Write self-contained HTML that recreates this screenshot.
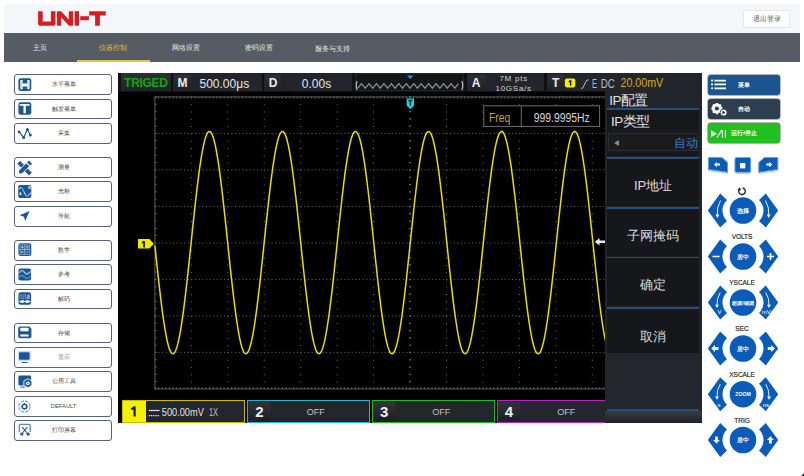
<!DOCTYPE html>
<html><head><meta charset="utf-8">
<style>
*{box-sizing:border-box;margin:0;padding:0}
html,body{width:804px;height:476px;overflow:hidden;background:#fff;font-family:"Liberation Sans",sans-serif}
.abs{position:absolute}
#hdr{position:absolute;left:4px;top:4px;width:796px;height:29px;background:#f4f7f9}
#nav{position:absolute;left:4px;top:33px;width:796px;height:28.5px;background:#555c63}
.tab{position:absolute;top:0;height:28.5px;width:73px;line-height:29px;text-align:center;font-size:6.8px;color:#e8eaec;padding-right:0.6px}
.tab.on{color:#e9bd3c}
#uline{position:absolute;left:72.7px;top:27.2px;width:73.6px;height:1.4px;background:#e8c04a}
#logout{position:absolute;left:739px;top:5.5px;width:47px;height:18.2px;background:#fff;border:1px solid #e6e9ec;border-radius:1px;font-size:6.5px;color:#555;text-align:center;line-height:16px}
.lb{position:absolute;left:14.2px;width:97.8px;height:20.9px;border:1.7px solid #56637a;border-radius:3px;background:#fff}
.lb .t{position:absolute;left:1px;right:0;top:0;bottom:0;text-align:center;font-size:5.8px;line-height:18.5px;color:#4a4a4a}
.lb svg{position:absolute;left:3px;top:2.8px;width:14px;height:14px;overflow:visible}
#scr{position:absolute;left:118px;top:72.8px;width:584px;height:350px;background:#000}

.grp{position:absolute;top:73.4px;height:18.1px;background:#22262c}
.lbx{position:absolute;top:1.3px;height:15.2px;background:linear-gradient(#2e3137,#1d2024);font:bold 12px "Liberation Sans",sans-serif;color:#ececec;text-align:center;line-height:17.6px}
.val{position:absolute;top:0;height:18.1px;font-size:12px;color:#e6e6e6;text-align:center;line-height:22.5px}
#bar{position:absolute;left:118px;top:72.8px;width:584px;height:19.2px;background:#0f1113}

#menu{position:absolute;z-index:5;left:605px;top:91px;width:97px;height:331.8px;background:#22262c}
.bl{position:absolute;left:2px;width:92.2px;height:1.8px;background:#25507c;box-shadow:0 -1px 1px #24262c}
.mb{position:absolute;left:2px;width:92.2px;background:#16171b;color:#dcdcdc;font-size:13px;text-align:center;font-weight:300}
.chb{position:absolute;top:400px;height:22.5px;border:1px solid;background:#23262c}
.chl{position:absolute;left:0.7px;top:0.7px;width:21.5px;height:19.2px;background:linear-gradient(#303338,#1c1f23);color:#f0f0f0;font:bold 15px "Liberation Sans",sans-serif;text-align:center;line-height:20px}
.off{position:absolute;top:0;height:20.5px;line-height:23.5px;font-size:9px;color:#c4c4c4;text-align:center;width:40px}

.rb{position:absolute;left:708px;width:72.4px;height:20.1px;border-radius:3px;color:#fff;font-size:6.2px;font-weight:bold;text-align:center;line-height:20px;box-shadow:0 0 0 0.7px rgba(30,30,30,0.45)}
.rb span{position:absolute;left:0;right:0;top:0;padding-right:0.3px}
.kl{position:absolute;left:712px;width:60px;text-align:center;font-size:6.6px;color:#222;line-height:8px;letter-spacing:-0.1px;-webkit-text-stroke:0.15px #222}
</style></head><body>
<div id="hdr">
  <svg class="abs" style="left:0;top:0" width="120" height="29" viewBox="4 4 120 29">
    <g fill="#d81c24">
      <path d="M38.1 11.2h4.6v10.2h8.2V11.2h4.6v12.2c0 1.4-.9 2.3-2.3 2.3H40.4c-1.4 0-2.3-.9-2.3-2.3z"/>
      <path d="M56.9 11.2h4.2l7.7 8.3v-8.3h4.3v14.5h-4.1l-7.9-8.4v8.4h-4.2z"/>
      <rect x="74.6" y="11.2" width="4.4" height="14.5"/>
      <rect x="80.2" y="16.2" width="8.7" height="4"/>
      <path d="M89.2 11.2h16.6v4.3h-5.9v10.2h-4.8V15.5h-5.9z"/>
    </g>
  </svg>
  <div id="logout">退出登录</div>
</div>
<div id="nav">
  <div class="tab" style="left:0">主页</div>
  <div class="tab on" style="left:73px">仪器控制</div>
  <div class="tab" style="left:146px">网络设置</div>
  <div class="tab" style="left:219px">密码设置</div>
  <div class="tab" style="left:292px;line-height:31px">服务与支持</div>
  <div id="uline"></div>
</div>

<!-- LEFT BUTTONS -->
<div id="left">
<div class="lb" style="top:74.10px"><svg viewBox="0 0 14 14"><rect x="0.4" y="0.3" width="12.9" height="12.7" rx="2.3" fill="#1c5794"/><path d="M2.3 2h2.3v3.6h4.7V2h2.3v9.3H9.3V8.4H4.6v2.9H2.3z" fill="#fff"/><path d="M3.45 2.6v8.1M10.45 2.6v8.1" stroke="#7fa3c8" stroke-width="0.4"/></svg><div class="t">水平菜单</div></div>
<div class="lb" style="top:98.55px"><svg viewBox="0 0 14 14"><rect x="0.4" y="0.2" width="12.9" height="12.65" rx="2.3" fill="#1c5794"/><path d="M1.7 1.95h9.9v1.7H7.8v7.7H5.5V3.65H1.7z" fill="#fff"/></svg><div class="t">触发菜单</div></div>
<div class="lb" style="top:123.00px"><svg viewBox="0 0 14 14"><path d="M1.1 4.9L5.7 10.6L9.4 2.5L12.3 8" stroke="#1c5794" stroke-width="1.1" fill="none"/><circle cx="1.1" cy="4.9" r="1.4" fill="#1c5794"/><circle cx="5.7" cy="10.6" r="1.5" fill="#1c5794"/><circle cx="9.4" cy="2.5" r="1.5" fill="#1c5794"/><circle cx="12.3" cy="8" r="1.5" fill="#1c5794"/></svg><div class="t">采集</div></div>
<div class="lb" style="top:156.90px"><svg viewBox="0 0 14 14"><g transform="rotate(45 6.6 7.1)"><rect x="-1.7" y="5.1" width="16.6" height="4" fill="#1c5794"/><path d="M1 5.1v1.5M3.5 5.1v1M10 5.1v1M12.5 5.1v1.5" stroke="#fff" stroke-width="0.5"/></g><g transform="rotate(-45 6.6 6.9)"><path d="M-1.9 6.9L0.6 4.6H11.4V9.2H0.6z" fill="#1c5794" stroke="#fff" stroke-width="0.8"/><rect x="12.3" y="4.6" width="2.6" height="4.6" fill="#1c5794"/></g></svg><div class="t">测量</div></div>
<div class="lb" style="top:181.35px"><svg viewBox="0 0 14 14"><rect x="0.2" y="0.1" width="13.1" height="13" rx="2" fill="#1c5794"/><path d="M0.8 4.2C2.5 2 3.8 2.6 5.2 5.2S7.6 11 9.2 11S11.6 9.4 12.8 7.6" stroke="#bcd2ea" stroke-width="1.1" fill="none"/><path d="M3.2 3.2C4.2 3.6 5 4.8 5.6 6M8.2 10.9C9 11 10 10.2 10.8 9.3" stroke="#3a8ef0" stroke-width="1.1" fill="none"/><text x="0.9" y="9.6" font-size="3.6" fill="#e8eef6" font-family="Liberation Sans" font-weight="bold">A</text><text x="10.2" y="4.4" font-size="3.6" fill="#e8eef6" font-family="Liberation Sans" font-weight="bold">B</text></svg><div class="t">光标</div></div>
<div class="lb" style="top:205.80px"><svg viewBox="0 0 14 14"><path d="M11.6 0.9L1.7 5.3L5.9 6.8L7.2 10.9Z" fill="#1c5794"/></svg><div class="t">导航</div></div>
<div class="lb" style="top:239.70px"><svg viewBox="0 0 14 14"><rect x="0.4" y="0.25" width="12.9" height="12.65" rx="2.3" fill="#1c5794"/><rect x="2" y="1.9" width="9.6" height="9.4" fill="none" stroke="#b8cce2" stroke-width="0.6"/><path d="M6.8 1.9v9.4M2 6.6h9.6" stroke="#b8cce2" stroke-width="0.8"/><path d="M3 4.2h2.6M4.3 2.9v2.6M8 3.6h2.6M8 4.9h2.6M3.3 8l2 2.2M5.3 8l-2 2.2M8 9.1h2.6" stroke="#e6eef8" stroke-width="0.7"/></svg><div class="t">数学</div></div>
<div class="lb" style="top:264.15px"><svg viewBox="0 0 14 14"><rect x="0.4" y="0.5" width="12.7" height="12" rx="2.3" fill="#1c5794"/><path d="M0.8 5.1C2 3.2 3.2 2.6 4.2 2.6C6 2.6 6.8 6 8.7 6C10.4 6 11.6 4.2 12.9 3.4" stroke="#a9c1dd" stroke-width="1.3" fill="none"/><path d="M0.8 9.4C2 8.1 3 7.5 4.2 7.5C6 7.5 6.8 10.6 8.7 10.6C10.4 10.6 11.6 8.6 12.9 7.9" stroke="#3f8fe6" stroke-width="1.3" fill="none"/></svg><div class="t">参考</div></div>
<div class="lb" style="top:288.60px"><svg viewBox="0 0 14 14"><rect x="0.4" y="0.35" width="12.7" height="12.45" rx="2.3" fill="#1c5794"/><path d="M1.9 6.8V2.8H3.9V6.8H5.8V2.8H7.6V6.8H9.4V2.8H11.4V6.8" stroke="#8fb0d4" stroke-width="0.7" fill="none"/><rect x="9.5" y="3" width="1.8" height="3.8" fill="#8fb0d4"/><path d="M0.6 9.6h12.3" stroke="#fff" stroke-width="0.7"/><ellipse cx="4.2" cy="9.6" rx="2.4" ry="1.3" fill="#fff"/><ellipse cx="9.4" cy="9.6" rx="2.4" ry="1.3" fill="#fff"/></svg><div class="t">解码</div></div>
<div class="lb" style="top:322.50px"><svg viewBox="0 0 14 14"><path d="M0.2 2.2A1.8 1.8 0 0 1 2 0.45H11.3L13.4 2.6V10.55A1.8 1.8 0 0 1 11.6 12.35H2A1.8 1.8 0 0 1 0.2 10.55Z" fill="#1c5794"/><rect x="2.3" y="1.8" width="8.3" height="3.4" rx="0.4" fill="#fff"/><rect x="2.3" y="8.4" width="8.3" height="2.1" rx="0.3" fill="#fff"/></svg><div class="t">存储</div></div>
<div class="lb" style="top:346.95px"><svg viewBox="0 0 14 14"><rect x="0" y="0.1" width="13.2" height="9.7" rx="0.8" fill="#b7c8dc"/><rect x="0.5" y="0.6" width="12.2" height="8.7" fill="#dfe7f0"/><rect x="1" y="1.3" width="10.6" height="7.4" rx="1" fill="#1c5794"/><rect x="3.6" y="10.9" width="6.1" height="1.2" rx="0.6" fill="#1c5794"/></svg><div class="t" style="color:#8a8a8a">显示</div></div>
<div class="lb" style="top:371.40px"><svg viewBox="0 0 14 14"><rect x="0.4" y="0.55" width="12.7" height="10" rx="1.2" fill="#1c5794"/><rect x="2.5" y="11.6" width="4.5" height="1" fill="#1c5794"/><path d="M9.85 3.2L14.2 5.7V10.8L9.85 13.3L5.5 10.8V5.7Z" fill="#fff"/><path d="M9.85 4.1L13.4 6.15V10.3L9.85 12.4L6.3 10.3V6.15Z" fill="#1c5794"/><circle cx="9.85" cy="8.3" r="1.9" fill="#fff"/><path d="M9.3 7.3v2l1.6-1z" fill="#1c5794"/></svg><div class="t">公用工具</div></div>
<div class="lb" style="top:395.85px"><svg viewBox="0 0 14 14"><circle cx="6.45" cy="6.5" r="5.6" fill="none" stroke="#1c5794" stroke-width="0.9" stroke-dasharray="3.2 1.2" opacity="0.85"/><circle cx="6.45" cy="6.5" r="2.3" fill="none" stroke="#1c5794" stroke-width="1.5"/><path d="M6.45 3.4v1M6.45 8.6v1M3.35 6.5h1M8.55 6.5h1M4.3 4.35l.7.7M8.6 8.65l-.7-.7M8.6 4.35l-.7.7M4.3 8.65l.7-.7" stroke="#1c5794" stroke-width="1.1"/></svg><div class="t">DEFAULT</div></div>
<div class="lb" style="top:420.30px"><svg viewBox="0 0 14 14"><path d="M1.4 8V1.3A1 1 0 0 1 2.4 0.4H11.2A1 1 0 0 1 12.2 1.3V8" fill="none" stroke="#5d88bd" stroke-width="1.3"/><path d="M4.2 3.2L9.2 9M9.4 3.2L4.4 9" stroke="#1c5794" stroke-width="1.1"/><circle cx="3.8" cy="10.1" r="1.7" fill="#1c5794"/><circle cx="10.1" cy="10.1" r="1.7" fill="#1c5794"/><circle cx="3.8" cy="10.1" r="0.5" fill="#8fb0d4"/></svg><div class="t">打印屏幕</div></div>
</div>

<!-- SCOPE -->

<div id="scr"></div>
<svg class="abs" style="left:0;top:0" width="804" height="476" viewBox="0 0 804 476">
 <g stroke="#5c5c5c" stroke-width="1" fill="none">
  <path d="M154.9 388.90V96.9H665.20V388.90Z"/>
  <path d="M154.90 96.9v1.6M154.90 388.90v-1.6M158.55 96.9v1.6M158.55 388.90v-1.6M162.19 96.9v1.6M162.19 388.90v-1.6M165.84 96.9v1.6M165.84 388.90v-1.6M169.48 96.9v1.6M169.48 388.90v-1.6M173.12 96.9v1.6M173.12 388.90v-1.6M176.77 96.9v1.6M176.77 388.90v-1.6M180.42 96.9v1.6M180.42 388.90v-1.6M184.06 96.9v1.6M184.06 388.90v-1.6M187.71 96.9v1.6M187.71 388.90v-1.6M191.35 96.9v1.6M191.35 388.90v-1.6M195.00 96.9v1.6M195.00 388.90v-1.6M198.64 96.9v1.6M198.64 388.90v-1.6M202.29 96.9v1.6M202.29 388.90v-1.6M205.93 96.9v1.6M205.93 388.90v-1.6M209.57 96.9v1.6M209.57 388.90v-1.6M213.22 96.9v1.6M213.22 388.90v-1.6M216.87 96.9v1.6M216.87 388.90v-1.6M220.51 96.9v1.6M220.51 388.90v-1.6M224.16 96.9v1.6M224.16 388.90v-1.6M227.80 96.9v1.6M227.80 388.90v-1.6M231.44 96.9v1.6M231.44 388.90v-1.6M235.09 96.9v1.6M235.09 388.90v-1.6M238.74 96.9v1.6M238.74 388.90v-1.6M242.38 96.9v1.6M242.38 388.90v-1.6M246.03 96.9v1.6M246.03 388.90v-1.6M249.67 96.9v1.6M249.67 388.90v-1.6M253.31 96.9v1.6M253.31 388.90v-1.6M256.96 96.9v1.6M256.96 388.90v-1.6M260.61 96.9v1.6M260.61 388.90v-1.6M264.25 96.9v1.6M264.25 388.90v-1.6M267.89 96.9v1.6M267.89 388.90v-1.6M271.54 96.9v1.6M271.54 388.90v-1.6M275.19 96.9v1.6M275.19 388.90v-1.6M278.83 96.9v1.6M278.83 388.90v-1.6M282.48 96.9v1.6M282.48 388.90v-1.6M286.12 96.9v1.6M286.12 388.90v-1.6M289.76 96.9v1.6M289.76 388.90v-1.6M293.41 96.9v1.6M293.41 388.90v-1.6M297.06 96.9v1.6M297.06 388.90v-1.6M300.70 96.9v1.6M300.70 388.90v-1.6M304.35 96.9v1.6M304.35 388.90v-1.6M307.99 96.9v1.6M307.99 388.90v-1.6M311.63 96.9v1.6M311.63 388.90v-1.6M315.28 96.9v1.6M315.28 388.90v-1.6M318.93 96.9v1.6M318.93 388.90v-1.6M322.57 96.9v1.6M322.57 388.90v-1.6M326.22 96.9v1.6M326.22 388.90v-1.6M329.86 96.9v1.6M329.86 388.90v-1.6M333.50 96.9v1.6M333.50 388.90v-1.6M337.15 96.9v1.6M337.15 388.90v-1.6M340.80 96.9v1.6M340.80 388.90v-1.6M344.44 96.9v1.6M344.44 388.90v-1.6M348.09 96.9v1.6M348.09 388.90v-1.6M351.73 96.9v1.6M351.73 388.90v-1.6M355.38 96.9v1.6M355.38 388.90v-1.6M359.02 96.9v1.6M359.02 388.90v-1.6M362.67 96.9v1.6M362.67 388.90v-1.6M366.31 96.9v1.6M366.31 388.90v-1.6M369.96 96.9v1.6M369.96 388.90v-1.6M373.60 96.9v1.6M373.60 388.90v-1.6M377.25 96.9v1.6M377.25 388.90v-1.6M380.89 96.9v1.6M380.89 388.90v-1.6M384.54 96.9v1.6M384.54 388.90v-1.6M388.18 96.9v1.6M388.18 388.90v-1.6M391.83 96.9v1.6M391.83 388.90v-1.6M395.47 96.9v1.6M395.47 388.90v-1.6M399.12 96.9v1.6M399.12 388.90v-1.6M402.76 96.9v1.6M402.76 388.90v-1.6M406.41 96.9v1.6M406.41 388.90v-1.6M410.05 96.9v1.6M410.05 388.90v-1.6M413.70 96.9v1.6M413.70 388.90v-1.6M417.34 96.9v1.6M417.34 388.90v-1.6M420.99 96.9v1.6M420.99 388.90v-1.6M424.63 96.9v1.6M424.63 388.90v-1.6M428.27 96.9v1.6M428.27 388.90v-1.6M431.92 96.9v1.6M431.92 388.90v-1.6M435.57 96.9v1.6M435.57 388.90v-1.6M439.21 96.9v1.6M439.21 388.90v-1.6M442.86 96.9v1.6M442.86 388.90v-1.6M446.50 96.9v1.6M446.50 388.90v-1.6M450.14 96.9v1.6M450.14 388.90v-1.6M453.79 96.9v1.6M453.79 388.90v-1.6M457.44 96.9v1.6M457.44 388.90v-1.6M461.08 96.9v1.6M461.08 388.90v-1.6M464.73 96.9v1.6M464.73 388.90v-1.6M468.37 96.9v1.6M468.37 388.90v-1.6M472.01 96.9v1.6M472.01 388.90v-1.6M475.66 96.9v1.6M475.66 388.90v-1.6M479.31 96.9v1.6M479.31 388.90v-1.6M482.95 96.9v1.6M482.95 388.90v-1.6M486.60 96.9v1.6M486.60 388.90v-1.6M490.24 96.9v1.6M490.24 388.90v-1.6M493.88 96.9v1.6M493.88 388.90v-1.6M497.53 96.9v1.6M497.53 388.90v-1.6M501.18 96.9v1.6M501.18 388.90v-1.6M504.82 96.9v1.6M504.82 388.90v-1.6M508.47 96.9v1.6M508.47 388.90v-1.6M512.11 96.9v1.6M512.11 388.90v-1.6M515.75 96.9v1.6M515.75 388.90v-1.6M519.40 96.9v1.6M519.40 388.90v-1.6M523.05 96.9v1.6M523.05 388.90v-1.6M526.69 96.9v1.6M526.69 388.90v-1.6M530.34 96.9v1.6M530.34 388.90v-1.6M533.98 96.9v1.6M533.98 388.90v-1.6M537.62 96.9v1.6M537.62 388.90v-1.6M541.27 96.9v1.6M541.27 388.90v-1.6M544.91 96.9v1.6M544.91 388.90v-1.6M548.56 96.9v1.6M548.56 388.90v-1.6M552.21 96.9v1.6M552.21 388.90v-1.6M555.85 96.9v1.6M555.85 388.90v-1.6M559.50 96.9v1.6M559.50 388.90v-1.6M563.14 96.9v1.6M563.14 388.90v-1.6M566.79 96.9v1.6M566.79 388.90v-1.6M570.43 96.9v1.6M570.43 388.90v-1.6M574.08 96.9v1.6M574.08 388.90v-1.6M577.72 96.9v1.6M577.72 388.90v-1.6M581.37 96.9v1.6M581.37 388.90v-1.6M585.01 96.9v1.6M585.01 388.90v-1.6M588.65 96.9v1.6M588.65 388.90v-1.6M592.30 96.9v1.6M592.30 388.90v-1.6M595.95 96.9v1.6M595.95 388.90v-1.6M599.59 96.9v1.6M599.59 388.90v-1.6M603.24 96.9v1.6M603.24 388.90v-1.6M606.88 96.9v1.6M606.88 388.90v-1.6M610.52 96.9v1.6M610.52 388.90v-1.6M614.17 96.9v1.6M614.17 388.90v-1.6M617.82 96.9v1.6M617.82 388.90v-1.6M621.46 96.9v1.6M621.46 388.90v-1.6M625.11 96.9v1.6M625.11 388.90v-1.6M628.75 96.9v1.6M628.75 388.90v-1.6M632.40 96.9v1.6M632.40 388.90v-1.6M636.04 96.9v1.6M636.04 388.90v-1.6M639.69 96.9v1.6M639.69 388.90v-1.6M643.33 96.9v1.6M643.33 388.90v-1.6M646.98 96.9v1.6M646.98 388.90v-1.6M650.62 96.9v1.6M650.62 388.90v-1.6M654.27 96.9v1.6M654.27 388.90v-1.6M657.91 96.9v1.6M657.91 388.90v-1.6M661.56 96.9v1.6M661.56 388.90v-1.6M665.20 96.9v1.6M665.20 388.90v-1.6M154.9 96.90h1.6M154.9 104.20h1.6M154.9 111.50h1.6M154.9 118.80h1.6M154.9 126.10h1.6M154.9 133.40h1.6M154.9 140.70h1.6M154.9 148.00h1.6M154.9 155.30h1.6M154.9 162.60h1.6M154.9 169.90h1.6M154.9 177.20h1.6M154.9 184.50h1.6M154.9 191.80h1.6M154.9 199.10h1.6M154.9 206.40h1.6M154.9 213.70h1.6M154.9 221.00h1.6M154.9 228.30h1.6M154.9 235.60h1.6M154.9 242.90h1.6M154.9 250.20h1.6M154.9 257.50h1.6M154.9 264.80h1.6M154.9 272.10h1.6M154.9 279.40h1.6M154.9 286.70h1.6M154.9 294.00h1.6M154.9 301.30h1.6M154.9 308.60h1.6M154.9 315.90h1.6M154.9 323.20h1.6M154.9 330.50h1.6M154.9 337.80h1.6M154.9 345.10h1.6M154.9 352.40h1.6M154.9 359.70h1.6M154.9 367.00h1.6M154.9 374.30h1.6M154.9 381.60h1.6M154.9 388.90h1.6M409.05 96.90h2M409.05 104.20h2M409.05 111.50h2M409.05 118.80h2M409.05 126.10h2M409.05 133.40h2M409.05 140.70h2M409.05 148.00h2M409.05 155.30h2M409.05 162.60h2M409.05 169.90h2M409.05 177.20h2M409.05 184.50h2M409.05 191.80h2M409.05 199.10h2M409.05 206.40h2M409.05 213.70h2M409.05 221.00h2M409.05 228.30h2M409.05 235.60h2M409.05 242.90h2M409.05 250.20h2M409.05 257.50h2M409.05 264.80h2M409.05 272.10h2M409.05 279.40h2M409.05 286.70h2M409.05 294.00h2M409.05 301.30h2M409.05 308.60h2M409.05 315.90h2M409.05 323.20h2M409.05 330.50h2M409.05 337.80h2M409.05 345.10h2M409.05 352.40h2M409.05 359.70h2M409.05 367.00h2M409.05 374.30h2M409.05 381.60h2M409.05 388.90h2" stroke="#6a6a6a"/>
 </g>
 <g stroke="#6a6a6a" stroke-width="1">
 <style>.dv{stroke-dasharray:1 6.3} .dh{stroke-dasharray:1 2.645}</style>
 <line x1="191.35" y1="96.9" x2="191.35" y2="388.90" class="dv"/>
<line x1="227.80" y1="96.9" x2="227.80" y2="388.90" class="dv"/>
<line x1="264.25" y1="96.9" x2="264.25" y2="388.90" class="dv"/>
<line x1="300.70" y1="96.9" x2="300.70" y2="388.90" class="dv"/>
<line x1="337.15" y1="96.9" x2="337.15" y2="388.90" class="dv"/>
<line x1="373.60" y1="96.9" x2="373.60" y2="388.90" class="dv"/>
<line x1="410.05" y1="96.9" x2="410.05" y2="388.90" class="dv"/>
<line x1="446.50" y1="96.9" x2="446.50" y2="388.90" class="dv"/>
<line x1="482.95" y1="96.9" x2="482.95" y2="388.90" class="dv"/>
<line x1="519.40" y1="96.9" x2="519.40" y2="388.90" class="dv"/>
<line x1="555.85" y1="96.9" x2="555.85" y2="388.90" class="dv"/>
<line x1="592.30" y1="96.9" x2="592.30" y2="388.90" class="dv"/>
<line x1="628.75" y1="96.9" x2="628.75" y2="388.90" class="dv"/>
<line x1="154.9" y1="133.40" x2="665.20" y2="133.40" class="dh"/>
<line x1="154.9" y1="169.90" x2="665.20" y2="169.90" class="dh"/>
<line x1="154.9" y1="206.40" x2="665.20" y2="206.40" class="dh"/>
<line x1="154.9" y1="242.90" x2="665.20" y2="242.90" class="dh"/>
<line x1="154.9" y1="279.40" x2="665.20" y2="279.40" class="dh"/>
<line x1="154.9" y1="315.90" x2="665.20" y2="315.90" class="dh"/>
<line x1="154.9" y1="352.40" x2="665.20" y2="352.40" class="dh"/>
 </g>
 <polyline points="154.9,245.5 155.9,255.0 156.9,264.5 157.9,273.7 158.9,282.8 159.9,291.6 160.9,300.0 161.9,307.9 162.9,315.4 163.9,322.4 164.9,328.7 165.9,334.4 166.9,339.5 167.9,343.8 168.9,347.4 169.9,350.2 170.9,352.2 171.9,353.4 172.9,353.8 173.9,353.4 174.9,352.1 175.9,350.0 176.9,347.2 177.9,343.5 178.9,339.1 179.9,334.0 180.9,328.3 181.9,321.9 182.9,314.9 183.9,307.3 184.9,299.3 185.9,290.9 186.9,282.1 187.9,273.1 188.9,263.8 189.9,254.3 190.9,244.8 191.9,235.2 192.9,225.7 193.9,216.3 194.9,207.1 195.9,198.2 196.9,189.6 197.9,181.4 198.9,173.7 199.9,166.4 200.9,159.7 201.9,153.7 202.9,148.3 203.9,143.6 204.9,139.6 205.9,136.4 206.9,133.9 207.9,132.3 208.9,131.5 209.9,131.5 210.9,132.3 211.9,134.0 212.9,136.4 213.9,139.7 214.9,143.7 215.9,148.4 216.9,153.8 217.9,159.9 218.9,166.6 219.9,173.8 220.9,181.6 221.9,189.8 222.9,198.4 223.9,207.4 224.9,216.5 225.9,225.9 226.9,235.4 227.9,245.0 228.9,254.5 229.9,264.0 230.9,273.3 231.9,282.4 232.9,291.1 233.9,299.5 234.9,307.5 235.9,315.1 236.9,322.0 237.9,328.4 238.9,334.2 239.9,339.3 240.9,343.6 241.9,347.2 242.9,350.1 243.9,352.1 244.9,353.4 245.9,353.8 246.9,353.4 247.9,352.2 248.9,350.1 249.9,347.3 250.9,343.7 251.9,339.4 252.9,334.3 253.9,328.6 254.9,322.2 255.9,315.2 256.9,307.7 257.9,299.7 258.9,291.3 259.9,282.6 260.9,273.5 261.9,264.2 262.9,254.8 263.9,245.2 264.9,235.7 265.9,226.2 266.9,216.8 267.9,207.6 268.9,198.6 269.9,190.0 270.9,181.8 271.9,174.0 272.9,166.8 273.9,160.1 274.9,154.0 275.9,148.5 276.9,143.8 277.9,139.8 278.9,136.5 279.9,134.0 280.9,132.4 281.9,131.5 282.9,131.5 283.9,132.3 284.9,133.9 285.9,136.3 286.9,139.5 287.9,143.4 288.9,148.1 289.9,153.5 290.9,159.6 291.9,166.2 292.9,173.5 293.9,181.2 294.9,189.4 295.9,198.0 296.9,206.9 297.9,216.1 298.9,225.5 299.9,235.0 300.9,244.5 301.9,254.1 302.9,263.5 303.9,272.8 304.9,281.9 305.9,290.7 306.9,299.1 307.9,307.1 308.9,314.7 309.9,321.7 310.9,328.1 311.9,333.9 312.9,339.0 313.9,343.4 314.9,347.1 315.9,350.0 316.9,352.1 317.9,353.3 318.9,353.8 319.9,353.4 320.9,352.3 321.9,350.3 322.9,347.5 323.9,343.9 324.9,339.6 325.9,334.6 326.9,328.9 327.9,322.5 328.9,315.6 329.9,308.1 330.9,300.2 331.9,291.8 332.9,283.0 333.9,274.0 334.9,264.7 335.9,255.2 336.9,245.7 337.9,236.1 338.9,226.6 339.9,217.2 340.9,208.0 341.9,199.1 342.9,190.5 343.9,182.2 344.9,174.4 345.9,167.1 346.9,160.4 347.9,154.3 348.9,148.8 349.9,144.0 350.9,139.9 351.9,136.7 352.9,134.1 353.9,132.4 354.9,131.5 355.9,131.5 356.9,132.2 357.9,133.8 358.9,136.2 359.9,139.3 360.9,143.2 361.9,147.9 362.9,153.2 363.9,159.3 364.9,165.9 365.9,173.1 366.9,180.8 367.9,189.0 368.9,197.5 369.9,206.4 370.9,215.6 371.9,225.0 372.9,234.5 373.9,244.0 374.9,253.6 375.9,263.0 376.9,272.4 377.9,281.5 378.9,290.3 379.9,298.7 380.9,306.8 381.9,314.3 382.9,321.4 383.9,327.8 384.9,333.6 385.9,338.8 386.9,343.2 387.9,346.9 388.9,349.8 389.9,352.0 390.9,353.3 391.9,353.8 392.9,353.5 393.9,352.3 394.9,350.4 395.9,347.6 396.9,344.1 397.9,339.8 398.9,334.9 399.9,329.2 400.9,322.9 401.9,316.0 402.9,308.5 403.9,300.6 404.9,292.2 405.9,283.5 406.9,274.4 407.9,265.2 408.9,255.7 409.9,246.2 410.9,236.6 411.9,227.1 412.9,217.7 413.9,208.5 414.9,199.5 415.9,190.9 416.9,182.6 417.9,174.8 418.9,167.5 419.9,160.7 420.9,154.5 421.9,149.0 422.9,144.2 423.9,140.1 424.9,136.8 425.9,134.2 426.9,132.5 427.9,131.6 428.9,131.5 429.9,132.2 430.9,133.7 431.9,136.0 432.9,139.1 433.9,143.0 434.9,147.6 435.9,153.0 436.9,158.9 437.9,165.5 438.9,172.7 439.9,180.4 440.9,188.6 441.9,197.1 442.9,206.0 443.9,215.1 444.9,224.5 445.9,234.0 446.9,243.6 447.9,253.1 448.9,262.6 449.9,271.9 450.9,281.0 451.9,289.8 452.9,298.3 453.9,306.4 454.9,314.0 455.9,321.0 456.9,327.5 457.9,333.4 458.9,338.5 459.9,343.0 460.9,346.7 461.9,349.7 462.9,351.9 463.9,353.2 464.9,353.8 465.9,353.5 466.9,352.4 467.9,350.5 468.9,347.8 469.9,344.3 470.9,340.1 471.9,335.1 472.9,329.5 473.9,323.2 474.9,316.3 475.9,308.9 476.9,301.0 477.9,292.6 478.9,283.9 479.9,274.9 480.9,265.6 481.9,256.2 482.9,246.7 483.9,237.1 484.9,227.6 485.9,218.2 486.9,208.9 487.9,200.0 488.9,191.3 489.9,183.0 490.9,175.2 491.9,167.8 492.9,161.0 493.9,154.8 494.9,149.3 495.9,144.4 496.9,140.3 497.9,136.9 498.9,134.4 499.9,132.6 500.9,131.6 501.9,131.4 502.9,132.1 503.9,133.6 504.9,135.9 505.9,139.0 506.9,142.8 507.9,147.4 508.9,152.7 509.9,158.6 510.9,165.2 511.9,172.4 512.9,180.0 513.9,188.1 514.9,196.7 515.9,205.5 516.9,214.7 517.9,224.0 518.9,233.5 519.9,243.1 520.9,252.6 521.9,262.1 522.9,271.4 523.9,280.6 524.9,289.4 525.9,297.9 526.9,306.0 527.9,313.6 528.9,320.7 529.9,327.2 530.9,333.1 531.9,338.3 532.9,342.8 533.9,346.6 534.9,349.6 535.9,351.8 536.9,353.2 537.9,353.8 538.9,353.5 539.9,352.5 540.9,350.6 541.9,348.0 542.9,344.5 543.9,340.3 544.9,335.4 545.9,329.8 546.9,323.5 547.9,316.7 548.9,309.3 549.9,301.4 550.9,293.1 551.9,284.4 552.9,275.3 553.9,266.1 554.9,256.7 555.9,247.1 556.9,237.6 557.9,228.1 558.9,218.6 559.9,209.4 560.9,200.4 561.9,191.7 562.9,183.4 563.9,175.5 564.9,168.2 565.9,161.4 566.9,155.1 567.9,149.6 568.9,144.7 569.9,140.5 570.9,137.1 571.9,134.5 572.9,132.6 573.9,131.6 574.9,131.4 575.9,132.1 576.9,133.5 577.9,135.7 578.9,138.8 579.9,142.6 580.9,147.1 581.9,152.4 582.9,158.3 583.9,164.9 584.9,172.0 585.9,179.6 586.9,187.7 587.9,196.2 588.9,205.1 589.9,214.2 590.9,223.6 591.9,233.0 592.9,242.6 593.9,252.2 594.9,261.6 595.9,271.0 596.9,280.1 597.9,289.0 598.9,297.5 599.9,305.6 600.9,313.2 601.9,320.3 602.9,326.9 603.9,332.8 604.9,338.1 605.9,342.6" fill="none" stroke="#e8de00" stroke-width="1.5" stroke-linejoin="miter"/>
</svg>



<div id="bar"></div>
<div class="grp" style="left:120.7px;width:50.4px;background:linear-gradient(#2c2f34,#1f2226)"><div style="position:absolute;left:0;right:0;top:0;font:bold 12px 'Liberation Sans',sans-serif;color:#13a313;text-align:center;line-height:20.6px;letter-spacing:-0.3px">TRIGED</div></div>
<div class="grp" style="left:172.7px;width:89.3px"><div class="lbx" style="left:1.5px;width:16.5px">M</div><div class="val" style="left:18px;right:4px">500.00μs</div></div>
<div class="grp" style="left:264px;width:88px"><div class="lbx" style="left:1px;width:16px">D</div><div class="val" style="left:17px;right:0">0.00s</div></div>
<div class="grp" style="left:354.7px;width:109.7px;background:#141518;box-shadow:inset 0 0 0 0.8px #2a2c30"></div>
<div class="grp" style="left:466.5px;width:77.8px"><div class="lbx" style="left:1px;width:17.1px">A</div><div class="val" style="left:18px;right:1.5px;font-size:8px;line-height:9.3px;padding-top:1.1px;letter-spacing:0.75px;color:#d2d2d2">7M pts<br>10GSa/s</div></div>
<div class="grp" style="left:546.5px;width:155.5px"><div class="lbx" style="left:1px;width:16.4px">T</div></div>


<svg class="abs" style="left:0;top:0" width="804" height="476" viewBox="0 0 804 476">
 <polyline points="357.8,88.2 361.5,83.7 365.3,88.2 369.0,83.7 372.7,88.2 376.5,83.7 380.2,88.2 383.9,83.7 387.6,88.2 391.4,83.7 395.1,88.2 398.8,83.7 402.6,88.2 406.3,83.7 410.0,88.2 413.8,83.7 417.5,88.2 421.2,83.7 424.9,88.2 428.7,83.7 432.4,88.2 436.1,83.7 439.9,88.2 443.6,83.7 447.3,88.2 451.1,83.7 454.8,88.2 458.5,83.7" fill="none" stroke="#8e8e8e" stroke-width="1.3"/>
 <path d="M357.2 81q-2 4.3 0 8.7M461.8 81q2 4.3 0 8.7" fill="none" stroke="#bdbdbd" stroke-width="1.2"/>
 <path d="M407 75.5h6.4l-3.2 3.6z" fill="#2a8ff0"/>
 <!-- trigger T marker -->
 <path d="M406.7 98.4h7.3v7.1l-3.65 3.4l-3.65-3.4z" fill="#00e2e2"/>
 <path d="M408.3 100.4h4.1M410.35 100.4v5.4" stroke="#062626" stroke-width="1.5"/>
 <!-- ch1 marker -->
 <path d="M138 239h11.5l4.3 4.8l-4.3 4.8h-11.5z" fill="#f0e800"/>
 <path d="M144.1 241v6.4M144.3 241.3l-2.3 1.5" stroke="#111" stroke-width="1.6" fill="none"/>
 <!-- right arrow -->
 <path d="M594.8 241.7l4.7-3.8v2.6h5.7v2.4h-5.7v2.6z" fill="#e8e8e8"/>
 <!-- freq box -->
 <rect x="483.8" y="105.8" width="115.8" height="20.6" fill="#000" stroke="#6e6e6e" stroke-width="1"/>
 <path d="M521.3 106v20" stroke="#6e6e6e" stroke-width="1"/>
 <text x="489" y="122.3" font-family="Liberation Sans" font-size="12.5" fill="#c9a13c" textLength="21.3" lengthAdjust="spacingAndGlyphs">Freq</text>
 <text x="533.8" y="122.3" font-family="Liberation Sans" font-size="12.5" fill="#d8d8d8" textLength="56" lengthAdjust="spacingAndGlyphs">999.9995Hz</text>
 <!-- trigger info -->
 <rect x="564.9" y="78.5" width="10.4" height="8.9" rx="1.8" fill="#f2f000"/>
 <path d="M570.6 80.2v5.6M570.8 80.5l-2 1.4" stroke="#111" stroke-width="1.4" fill="none"/>
 <path d="M581 88.2h1.6l4.2-8.2h2" fill="none" stroke="#bdbdbd" stroke-width="1"/>
 <text x="592" y="87.6" font-family="Liberation Sans" font-size="12" fill="#bdbdbd" textLength="5" lengthAdjust="spacingAndGlyphs">E</text>
 <text x="600.7" y="87.6" font-family="Liberation Sans" font-size="12" fill="#bdbdbd" textLength="14" lengthAdjust="spacingAndGlyphs">DC</text>
 <text x="620.5" y="87.4" font-family="Liberation Sans" font-size="12" fill="#d9ab1a" textLength="42.7" lengthAdjust="spacingAndGlyphs">20.00mV</text>
</svg>


<div id="menu">
  <div style="position:absolute;left:4.3px;top:2.5px;font-size:13.5px;font-weight:300;color:#e2e2e2;line-height:14px;letter-spacing:-0.6px">IP配置</div>
  <div class="bl" style="top:16.8px"></div>
  <div style="position:absolute;left:2px;top:18.6px;width:92.2px;height:47.8px;background:#17181c"></div>
  <div style="position:absolute;left:6px;top:24px;font-size:13.5px;font-weight:300;color:#e2e2e2;line-height:14px;letter-spacing:-0.5px">IP类型</div>
  <div style="position:absolute;left:3.3px;top:42.4px;width:89.5px;height:17.4px;background:#1b1b1e;border:1px solid #2c2e33"></div>
  <div style="position:absolute;left:9.4px;top:48.5px;width:0;height:0;border-top:3.8px solid transparent;border-bottom:3.8px solid transparent;border-right:5.8px solid #8c8c8c"></div>
  <div style="position:absolute;left:60px;width:32.5px;top:43.5px;font-size:12px;color:#2f7fd8;line-height:16px;text-align:right">自动</div>
  <div class="bl" style="top:66.4px"></div>
  <div class="mb" style="top:68.2px;height:48px;line-height:53px">IP地址</div>
  <div class="bl" style="top:116.2px"></div>
  <div class="mb" style="top:118px;height:47.5px;line-height:53px">子网掩码</div>
  <div class="bl" style="top:165.5px"></div>
  <div class="mb" style="top:167.3px;height:48.5px;line-height:53px">确定</div>
  <div class="bl" style="top:215.8px"></div>
  <div class="mb" style="top:217.6px;height:44.6px;line-height:56px">取消</div>
  <div style="position:absolute;left:0;width:97px;top:262.2px;height:55.6px;background:#23262d"></div>
  <div class="bl" style="top:317.8px"></div>
  <div style="position:absolute;left:0;width:97px;top:319.6px;height:12.2px;background:linear-gradient(#383c42,#1e2126)"></div>
</div>
<div class="chb" style="left:121.8px;width:123.2px;border-color:#c9bc00">
  <div style="position:absolute;left:0;top:0;width:23.3px;height:20.5px;background:#f4f200"><svg style="position:absolute;left:0;top:0" width="24" height="21" viewBox="121.8 400 24 21"><path d="M133.4 405.4V415.6M133.7 405.8l-3.5 2.5" stroke="#141414" stroke-width="2.1" fill="none"/></svg></div>
</div>
<svg class="abs" style="left:0;top:0" width="804" height="476" viewBox="0 0 804 476">
  <path d="M148.8 410.5h10.8" stroke="#e0e0e0" stroke-width="1.2"/>
  <path d="M148.8 415.6h10.8" stroke="#e0e0e0" stroke-width="1.1" stroke-dasharray="1.4 0.8"/>
  <text x="161.8" y="416.4" font-family="Liberation Sans" font-size="10.5" fill="#e4e4e4" textLength="42" lengthAdjust="spacingAndGlyphs">500.00mV</text>
  <text x="209" y="416.4" font-family="Liberation Sans" font-size="10.5" fill="#c8c8c8" textLength="9" lengthAdjust="spacingAndGlyphs">1X</text>
</svg>
<div class="chb" style="left:247px;width:122.8px;border-color:#1fb6c6"><div class="chl">2</div><div class="off" style="left:47.8px">OFF</div></div>
<div class="chb" style="left:371.8px;width:123.2px;border-color:#19bf19"><div class="chl">3</div><div class="off" style="left:48.5px">OFF</div></div>
<div class="chb" style="left:496.5px;width:130px;border-color:#c21fc2"><div class="chl">4</div><div class="off" style="left:48.8px">OFF</div></div>

<!-- RIGHT CONTROLS -->
<div id="right"></div><svg class="abs" style="left:0;top:0;z-index:2" width="804" height="476" viewBox="0 0 804 476">

<g fill="#fff"><circle cx="712.1" cy="80.6" r="1.05"/><circle cx="712.1" cy="84.4" r="1.05"/><circle cx="712.1" cy="88.3" r="1.05"/></g>
<path d="M714.4 80.6h11.6M714.4 84.4h11.6M714.4 88.3h11.6" stroke="#fff" stroke-width="1.8"/>
<g transform="translate(716.9 108.6)"><circle r="3.9" fill="none" stroke="#fff" stroke-width="2.2"/><path d="M0-5.6v11.2M-5.6 0h11.2M-4-4l8 8M4-4l-8 8" stroke="#fff" stroke-width="2"/><circle r="2" fill="#2c3e50"/></g>
<circle cx="723.6" cy="112.6" r="3.5" fill="#fff" stroke="#2c3e50" stroke-width="0.9"/><path d="M722.4 110.6v4l3.2-2z" fill="#2c3e50"/>
<path d="M711 130.3v7l5.8-3.5z" fill="#fff"/><path d="M717 137.5l5-7.5M722.4 130v7.5M725.4 130v7.5" stroke="#fff" stroke-width="1.1"/>


<g fill="none" stroke="#9dbde6" stroke-width="0.9" transform="translate(0 1)"><path d="M708.5 157.5h13.5l5.5 5v9.8l-19-2.8z"/><rect x="735" y="157.5" width="15.6" height="14.8" rx="1.5"/><path d="M777.8 157.5h-13.5l-5.5 5v9.8l19-2.8z"/></g>
<path d="M708.5 157.5h13.5l5.5 5v9.8l-19-2.8z" fill="#0b5cb8" stroke="#6f9fd8" stroke-width="0.9" stroke-linejoin="round"/>
<path d="M714 164.6l3-2.6v1.6h3v2h-3v1.6z" fill="#fff"/>
<rect x="735" y="157.5" width="15.6" height="14.8" rx="1.5" fill="#0b5cb8" stroke="#6f9fd8" stroke-width="0.9"/>
<rect x="740" y="163" width="5.3" height="5.4" fill="#fff"/>
<path d="M777.8 157.5h-13.5l-5.5 5v9.8l19-2.8z" fill="#0b5cb8" stroke="#6f9fd8" stroke-width="0.9" stroke-linejoin="round"/>
<path d="M772.3 164.6l-3-2.6v1.6h-3v2h3v1.6z" fill="#fff"/>
<g transform="translate(742 191.2)"><path d="M0.6 -3.2A3.3 3.3 0 1 1 -3.1 -1.1" fill="none" stroke="#1c2b3a" stroke-width="1.4"/><path d="M-4.6 -1.3l2.4-2.6l1.3 3.3z" fill="#1c2b3a"/></g>

<g transform="translate(743 210.5)" fill="#0b5cb8"><circle r="13.3"/><path d="M-35.2 0L-22.8 -17L-16 -10.5A14.5 14.5 0 0 0 -16 10.5L-22.8 17Z"/><path d="M-35.2 0L-22.8 -17L-16 -10.5A14.5 14.5 0 0 0 -16 10.5L-22.8 17Z" transform="scale(-1 1)"/></g>
<g transform="translate(743 256.5)" fill="#0b5cb8"><circle r="13.3"/><path d="M-35.2 0L-22.8 -17L-16 -10.5A14.5 14.5 0 0 0 -16 10.5L-22.8 17Z"/><path d="M-35.2 0L-22.8 -17L-16 -10.5A14.5 14.5 0 0 0 -16 10.5L-22.8 17Z" transform="scale(-1 1)"/></g>
<g transform="translate(743 302.5)" fill="#0b5cb8"><circle r="13.3"/><path d="M-35.2 0L-22.8 -17L-16 -10.5A14.5 14.5 0 0 0 -16 10.5L-22.8 17Z"/><path d="M-35.2 0L-22.8 -17L-16 -10.5A14.5 14.5 0 0 0 -16 10.5L-22.8 17Z" transform="scale(-1 1)"/></g>
<g transform="translate(743 348.5)" fill="#0b5cb8"><circle r="13.3"/><path d="M-35.2 0L-22.8 -17L-16 -10.5A14.5 14.5 0 0 0 -16 10.5L-22.8 17Z"/><path d="M-35.2 0L-22.8 -17L-16 -10.5A14.5 14.5 0 0 0 -16 10.5L-22.8 17Z" transform="scale(-1 1)"/></g>
<g transform="translate(743 394.2)" fill="#0b5cb8"><circle r="13.3"/><path d="M-35.2 0L-22.8 -17L-16 -10.5A14.5 14.5 0 0 0 -16 10.5L-22.8 17Z"/><path d="M-35.2 0L-22.8 -17L-16 -10.5A14.5 14.5 0 0 0 -16 10.5L-22.8 17Z" transform="scale(-1 1)"/></g>
<g transform="translate(743 440.0)" fill="#0b5cb8"><circle r="13.3"/><path d="M-35.2 0L-22.8 -17L-16 -10.5A14.5 14.5 0 0 0 -16 10.5L-22.8 17Z"/><path d="M-35.2 0L-22.8 -17L-16 -10.5A14.5 14.5 0 0 0 -16 10.5L-22.8 17Z" transform="scale(-1 1)"/></g>
<path d="M720.5 200.5 Q716.5 207.5 717.3 215.5" fill="none" stroke="#fff" stroke-width="0.9"/><path d="M715.5 214.5l1.9 3.5l1.9-3.5z" fill="#fff"/><path d="M765.5 200.5 Q769.5 207.5 768.7 215.5" fill="none" stroke="#fff" stroke-width="0.9"/><path d="M766.8 214.5l1.9 3.5l1.9-3.5z" fill="#fff"/>
<path d="M712.5 256.5h7M767 256.5h7M770.5 253.0v7" stroke="#fff" stroke-width="1.6"/>
<path d="M720.2 292.5 Q716.5 298.5 717 305.5" fill="none" stroke="#fff" stroke-width="0.9"/><path d="M715.1 304.8l1.9 3.3l1.9-3.3z" fill="#fff"/><path d="M765.8 292.5 Q769.5 298.5 769 305.5" fill="none" stroke="#fff" stroke-width="0.9"/><path d="M767.1 304.8l1.9 3.3l1.9-3.3z" fill="#fff"/>
<text x="717.6" y="314.4" font-family="Liberation Sans" font-size="6" fill="#fff">V</text><text x="761.7" y="314.4" font-family="Liberation Sans" font-size="6" fill="#fff" textLength="9" lengthAdjust="spacingAndGlyphs">mV</text>
<path d="M711.4 348.5l3.5-3.4v2h3.5v2.8h-3.5v2z" fill="#fff"/><path d="M774.8 348.5l-3.5-3.4v2h-3.5v2.8h3.5v2z" fill="#fff"/>
<path d="M720.2 384.2 Q716.5 390.2 717 397.2" fill="none" stroke="#fff" stroke-width="0.9"/><path d="M715.1 396.5l1.9 3.3l1.9-3.3z" fill="#fff"/><path d="M765.8 384.2 Q769.5 390.2 769 397.2" fill="none" stroke="#fff" stroke-width="0.9"/><path d="M767.1 396.5l1.9 3.3l1.9-3.3z" fill="#fff"/>
<text x="717.6" y="407.4" font-family="Liberation Sans" font-size="6" fill="#fff">s</text><text x="762.7" y="407.4" font-family="Liberation Sans" font-size="6" fill="#fff" textLength="6.5" lengthAdjust="spacingAndGlyphs">ns</text>
<path d="M716.5 443.5l-3.3-3.5h2v-3.5h2.6v3.5h2z" fill="#fff"/><path d="M770.4 436.3l-3.4 3.6h2v3.6h2.8v-3.6h2z" fill="#fff"/>
</svg>
<div class="rb" style="top:74.5px;background:#1b558f"><span>菜单</span></div>
<div class="rb" style="top:99px;background:#2c3e50"><span>自动</span></div>
<div class="rb" style="top:123.4px;background:#21bf21"><span>运行/停止</span></div>
<div class="abs" style="z-index:3;left:713px;width:60px;top:206.5px;text-align:center;color:#fff;font-weight:bold;font-size:6.2px;line-height:8px">选择</div>
<div class="kl" style="top:233.0px">VOLTS</div>
<div class="abs" style="z-index:3;left:713px;width:60px;top:252.5px;text-align:center;color:#fff;font-weight:bold;font-size:6.2px;line-height:8px">居中</div>
<div class="kl" style="top:279.0px">YSCALE</div>
<div class="abs" style="z-index:3;left:713px;width:60px;top:298.5px;text-align:center;color:#fff;font-weight:bold;font-size:5.1px;line-height:8px">粗调/细调</div>
<div class="kl" style="top:325.0px">SEC</div>
<div class="abs" style="z-index:3;left:713px;width:60px;top:344.5px;text-align:center;color:#fff;font-weight:bold;font-size:6.2px;line-height:8px">居中</div>
<div class="kl" style="top:370.7px">XSCALE</div>
<div class="abs" style="z-index:3;left:713px;width:60px;top:390.2px;text-align:center;color:#fff;font-weight:bold;font-size:5.1px;line-height:8px">ZOOM</div>
<div class="kl" style="top:416.5px">TRIG</div>
<div class="abs" style="z-index:3;left:713px;width:60px;top:436.0px;text-align:center;color:#fff;font-weight:bold;font-size:6.2px;line-height:8px">居中</div>
<svg class="abs" style="left:796px;top:468px;z-index:9" width="8" height="8"><path d="M8 5.2V8H5.2z" fill="#141a3a"/></svg>
</body></html>
